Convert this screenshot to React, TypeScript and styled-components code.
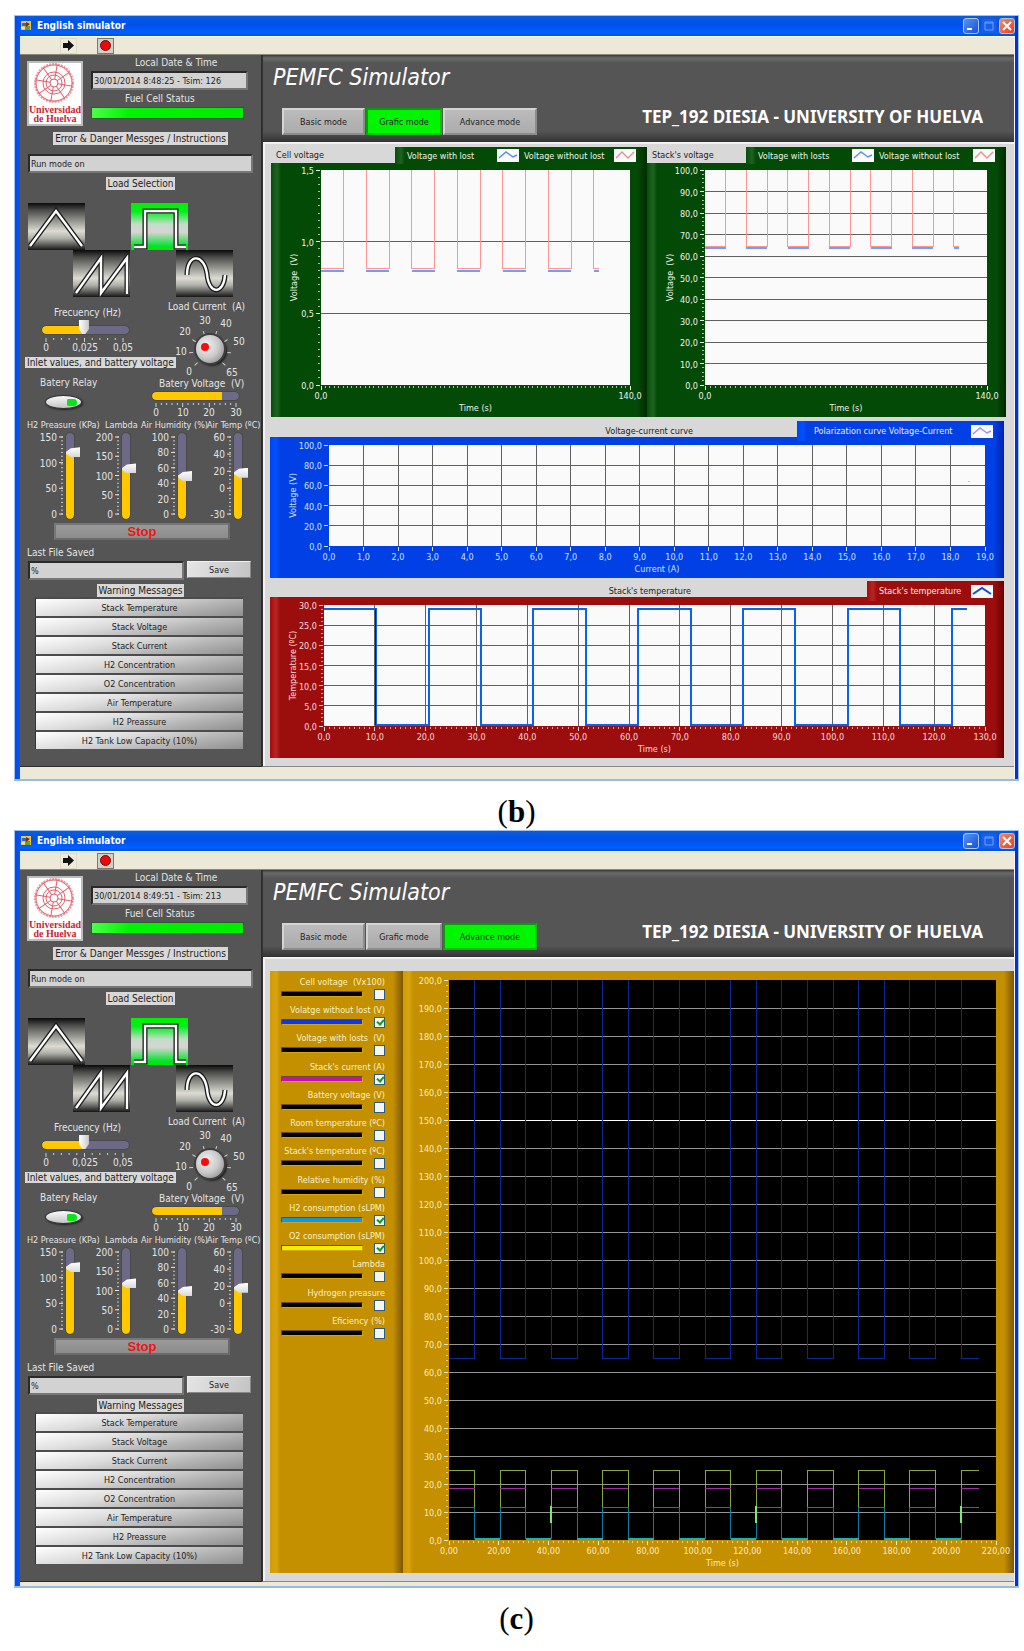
import React, { useId, useState } from "react";
import styled, { createGlobalStyle, css } from "styled-components";

const uiFont = `"DejaVu Sans Condensed", Tahoma, "Noto Sans", sans-serif`;

const Global = createGlobalStyle`
  * { box-sizing: border-box; }
  body { margin: 0; background: #fff; font-family: ${uiFont}; font-size: 10px; }
  button, input { font-family: inherit; font-size: 9px; margin: 0; }
`;

/* ---------- page and window frame ---------- */

const Page = styled.main`
  padding: 15px 5px 0 14px;
`;

const Figure = styled.figure`
  margin: 0;
`;

const Caption = styled.figcaption`
  height: 49px;
  padding-top: 13px;
  text-align: center;
  font-family: "Liberation Serif", "Times New Roman", serif;
  font-size: 31px;
  line-height: 36px;
  color: #000;
`;

const Frame = styled.section`
  border: 1px solid #9cc1ec;
  border-bottom: 2px solid #98bbe0;
  padding: 0 3px 0 5px;
  background: linear-gradient(90deg, #0a48e8 0, #0058f0 5px, #0831c8 100%);
`;

const TitleBar = styled.header`
  display: flex;
  align-items: center;
  gap: 5px;
  height: 20px;
  background: linear-gradient(#0a5ce0, #0050e8 40%, #0060ff 85%, #0050d8);
`;

const TitleText = styled.h1`
  flex: 1;
  margin: 0;
  font-size: 10px;
  line-height: 18px;
  color: #fff;
`;

const CaptionButtons = styled.div`
  display: flex;
  gap: 2px;
`;

const CaptionButton = styled.button<{ $kind: "min" | "max" | "close" }>`
  width: 16px;
  height: 16px;
  padding: 0;
  border-radius: 3px;
  border: 1px solid ${(p) => (p.$kind === "max" ? "#1659e0" : "#a9c6f5")};
  background: ${(p) =>
    p.$kind === "close"
      ? "linear-gradient(135deg, #f08a68, #e8401c)"
      : p.$kind === "max"
      ? "#1460ea"
      : "linear-gradient(135deg, #5b92f2, #1450d8)"};
  svg { display: block; }
`;

const Body = styled.div`
  background: #ece9d8;
  border-right: 1px solid #f4f4fa;
`;

const ToolBar = styled.div`
  display: flex;
  align-items: center;
  gap: 20px;
  height: 19px;
  padding-left: 40px;
  border-top: 1px solid #fff;
  border-bottom: 1px solid #8a8878;
`;

const ToolButton = styled.button<{ $framed?: boolean }>`
  width: 17px;
  height: 16px;
  padding: 0;
  border: 1px solid ${(p) => (p.$framed ? "#7c7a70" : "#dedac8")};
  background: ${(p) => (p.$framed ? "#d4d0c8" : "#eeebdc")};
  svg { display: block; margin: 0 auto; }
`;

const StatusBar = styled.div<{ $h: number }>`
  height: ${(p) => p.$h}px;
  background: #ece9d8;
`;

const Columns = styled.div`
  display: grid;
  grid-template-columns: 242px minmax(0, 1fr);
`;

/* ---------- side bar ---------- */

const Side = styled.aside`
  overflow: hidden;
  background: #555;
  color: #e4e4e4;
  border-right: 1px solid #2c2c2c;
  border-bottom: 1px solid #2c2c2c;
  padding-bottom: 16px;
`;

const TopArea = styled.div`
  display: grid;
  grid-template-columns: 56px 1fr;
  column-gap: 8px;
  padding-left: 7px;
  height: 71px;
`;

const LogoBox = styled.div`
  height: 65px;
  margin-top: 6px;
  background: #fff;
  border: 2px solid #bcbcbc;
`;

const Readouts = styled.div`
  display: grid;
  grid-template-rows: 16px 19px 17px 12px;
  align-items: end;
  align-content: start;
`;

const SmallLabel = styled.label<{ $left?: number }>`
  display: block;
  height: 15px;
  line-height: 14px;
  white-space: nowrap;
  padding-left: ${(p) => p.$left ?? 0}px;
`;

const Field = styled.input<{ $w: number }>`
  display: block;
  width: ${(p) => p.$w}px;
  height: 19px;
  padding: 0 1px;
  border: 2px solid;
  border-color: #2a2a2a #777 #777 #2a2a2a;
  border-radius: 0;
  background: #d2d2d2;
  color: #222;
`;

const Led = styled.div`
  width: 153px;
  height: 12px;
  border: 1px solid #2f5a2f;
  background: linear-gradient(100deg, #4cff4c, #00f400 25%, #00ec00);
`;

const TagRow = styled.div<{ $top: number }>`
  display: flex;
  justify-content: center;
  margin-top: ${(p) => p.$top}px;
`;

const Tag = styled.span`
  height: 13px;
  padding: 0 2px;
  line-height: 13px;
  white-space: nowrap;
  background: #d8d8d8;
  color: #222;
`;

const MessageRow = styled.div`
  padding: 9px 0 0 8px;
`;

const Waves = styled.div`
  margin-top: 13px;
`;

const WaveRow = styled.div<{ $left: number }>`
  display: flex;
  gap: 46px;
  padding-left: ${(p) => p.$left}px;
`;

const WaveButton = styled.button<{ $on?: boolean }>`
  width: 57px;
  height: 47px;
  padding: 0;
  border: 0;
  background: ${(p) =>
    p.$on
      ? "linear-gradient(#00f000 0, #00f01c 18%, #c4dcc8 45%, #d8d4d4 62%, #00e428 92%, #00e800)"
      : "linear-gradient(#0a0a0a 0, #4a4a48 15%, #dcdcd4 60%, #b0b0aa 75%, #161616 100%)"};
  svg { display: block; }
`;

const Split = styled.div<{ $left: number; $top: number; $h: number }>`
  display: grid;
  grid-template-columns: ${(p) => p.$left}px 1fr;
  margin-top: ${(p) => p.$top}px;
  height: ${(p) => p.$h}px;
`;

const Stack = styled.div<{ $pad?: string }>`
  padding: ${(p) => p.$pad ?? "0"};
  svg { display: block; }
`;

const HSlider = styled.input<{ $fill: number; $bare?: boolean }>`
  appearance: none;
  display: block;
  width: 87px;
  height: 8px;
  border-radius: 4px;
  outline: 1px solid #4a4a4a;
  background: linear-gradient(90deg, #ffc800 ${(p) => p.$fill}%, #6c6a86 ${(p) => p.$fill}%);
  &::-webkit-slider-runnable-track { height: 8px; }
  &::-webkit-slider-thumb {
    appearance: none;
    width: ${(p) => (p.$bare ? 0 : 10)}px;
    height: 14px;
    margin-top: -6px;
    background: linear-gradient(90deg, #fff, #c8c8c8);
    clip-path: polygon(0 0, 100% 0, 100% 65%, 65% 100%, 35% 100%, 0 65%);
  }
`;

const Dial = styled.div`
  display: grid;
  place-items: center;
  width: 84px;
  height: 60px;
  > * { grid-area: 1 / 1; }
`;

const Knob = styled.input`
  appearance: none;
  width: 28px;
  height: 28px;
  margin-top: 4px;
  padding: 0 4px 0 1px;
  border-radius: 50%;
  background: radial-gradient(circle at 38% 38%, #f4f4f4, #c8c8c8 50%, #777 100%);
  box-shadow: 0 0 0 2px #3e3e3e, 2px 2px 2px 1px #222;
  &::-webkit-slider-thumb {
    appearance: none;
    width: 8px;
    height: 8px;
    margin-top: -5px;
    border-radius: 50%;
    background: #f80c0c;
  }
`;

const Relay = styled.button`
  display: flex;
  justify-content: flex-end;
  align-items: center;
  width: 37px;
  height: 14px;
  margin: 4px 0 0 25px;
  padding: 0 4px;
  border: 1px solid #333;
  border-radius: 50%;
  background: linear-gradient(#fafafa, #c4c4c4);
  box-shadow: 1px 1px 2px #222;
`;

const RelayLamp = styled.span`
  width: 10px;
  height: 7px;
  border-radius: 2px 5px 5px 2px;
  background: #0ae414;
`;

const GaugeNames = styled.div`
  display: grid;
  grid-template-columns: 78px 36px 66px 55px;
  padding-left: 7px;
  height: 15px;
  font-size: 9px;
  line-height: 15px;
  white-space: pre;
`;

const Gauges = styled.div`
  display: grid;
  grid-template-columns: repeat(4, 56px);
  padding-left: 18px;
`;

const Gauge = styled.div`
  display: flex;
  gap: 2px;
`;

const VSlider = styled.input<{ $fill: number }>`
  appearance: none;
  writing-mode: vertical-lr;
  direction: rtl;
  width: 8px;
  height: 86px;
  border-radius: 4px;
  outline: 1px solid #4a4a4a;
  background: linear-gradient(0deg, #ffc800 ${(p) => p.$fill}%, #6c6a86 ${(p) => p.$fill}%);
  &::-webkit-slider-thumb {
    appearance: none;
    width: 14px;
    height: 10px;
    translate: 3px 0;
    background: linear-gradient(#fff, #d8d8d8);
    clip-path: polygon(100% 0, 100% 100%, 35% 100%, 0 65%, 0 45%, 35% 10%);
  }
`;

const StopButton = styled.button`
  display: block;
  width: 176px;
  height: 17px;
  margin: 4px 0 6px 34px;
  padding: 0;
  border: 2px solid;
  border-color: #777 #6a6a6a #6a6a6a #777;
  background: linear-gradient(#9a9a9a, #8c8c8c);
  color: #f01414;
  font: bold 13px/12px "Liberation Sans", Arial, sans-serif;
`;

const FileRow = styled.div`
  display: flex;
  gap: 3px;
  padding-left: 8px;
`;

const SaveButton = styled.button`
  width: 64px;
  height: 17px;
  padding: 0;
  border: 1px solid;
  border-color: #f0f0f0 #888 #888 #f0f0f0;
  background: linear-gradient(100deg, #e4e4e4, #c4c4c4);
  color: #222;
`;

const Warnings = styled.div`
  display: grid;
  grid-auto-rows: 19px;
  width: 208px;
  margin-left: 15px;
`;

const WarningButton = styled.button`
  padding: 0;
  border: 0;
  border-top: 2px solid #4c4c4c;
  border-left: 1px solid #333;
  background: linear-gradient(170deg, #fff 0, #dcdcdc 38%, #b4b4b4 68%, #8f8f8f 100%);
  color: #222;
`;

/* ---------- main area ---------- */

const Main = styled.div`
  display: flex;
  flex-direction: column;
  border-left: 1px solid #333;
  border-bottom: 1px solid #888;
`;

const Banner = styled.div`
  height: 87px;
  padding: 7px 31px 0 10px;
  background: linear-gradient(#3a3a3a 0, #6a6a6a 3px, #555 8px, #555 76px, #333 100%);
  color: #fff;
`;

const BannerTitle = styled.h2`
  margin: 0 0 16px;
  font-size: 23px;
  line-height: 30px;
  font-style: italic;
  font-weight: 400;
`;

const BannerRow = styled.div`
  display: flex;
  justify-content: space-between;
  padding-left: 9px;
`;

const Modes = styled.nav`
  display: flex;
  gap: 1px;
`;

const ModeButton = styled.button<{ $w: number; $on: boolean }>`
  width: ${(p) => p.$w}px;
  height: 27px;
  padding: 0;
  border: 2px solid;
  color: #222;
  ${(p) =>
    p.$on
      ? css`
          border-color: #0a9a0a #08c008 #08c008 #0a9a0a;
          background: #00f600;
        `
      : css`
          border-color: #d4d4d4 #8c8c8c #8c8c8c #d4d4d4;
          background: linear-gradient(#bcbcbc, #ababab);
        `}
`;

const Affiliation = styled.strong`
  font-family: "Noto Sans", "Open Sans", sans-serif;
  font-size: 17px;
  line-height: 18px;
  white-space: nowrap;
`;

const Content = styled.div<{ $pad: string }>`
  flex: 1;
  padding: ${(p) => p.$pad};
  background: #d8d8d8;
  border: solid #f2f2f2;
  border-width: 2px 0 0 2px;
`;

type Tone = "green" | "blue" | "red" | "gold";
const tones: Record<Tone, { base: string; light: string; dark: string; edge: string }> = {
  green: { base: "#034a07", light: "#1e6420", dark: "#002c02", edge: "#064e0a" },
  blue: { base: "#0040e4", light: "#0052fc", dark: "#0022b0", edge: "#0044f0" },
  red: { base: "#9c0e0e", light: "#b82424", dark: "#6c0000", edge: "#a40c0c" },
  gold: { base: "#c49000", light: "#d8a40c", dark: "#7c5600", edge: "#d09a04" },
};
const bevel = (t: Tone) => {
  const c = tones[t];
  return `linear-gradient(90deg, ${c.edge} 0, ${c.light} 6px, ${c.base} 10px, ${c.base} calc(100% - 10px), ${c.dark} 100%)`;
};

const TwoUp = styled.div`
  display: grid;
  grid-template-columns: 376fr 359fr;
  padding-left: 1px;
`;

const Panel = styled.section`
  min-width: 0;
`;

const WidePanel = styled(Panel)<{ $top: number }>`
  margin: ${(p) => p.$top}px 2px 0 0;
`;

const PanelHead = styled.div<{ $cols: string }>`
  display: grid;
  grid-template-columns: ${(p) => p.$cols};
  height: 16px;
  font-size: 9px;
  line-height: 16px;
`;

const PanelName = styled.h3<{ $center?: boolean }>`
  margin: 0;
  padding-left: 5px;
  font-size: 9px;
  line-height: ${(p) => (p.$center ? 20 : 17)}px;
  font-weight: 400;
  color: #222;
  white-space: nowrap;
  text-align: ${(p) => (p.$center ? "right" : "left")};
`;

const Legend = styled.div<{ $tone: Tone }>`
  display: flex;
  align-items: center;
  gap: 5px;
  padding: 0 11px 0 12px;
  background: ${(p) => bevel(p.$tone)};
  color: #f0f0e8;
`;

const LegendItem = styled.span`
  display: flex;
  flex: 1;
  align-items: center;
  justify-content: space-between;
  white-space: nowrap;
`;

const ChartBox = styled.div<{ $tone: Tone }>`
  background: ${(p) => bevel(p.$tone)};
  svg { display: block; width: 100%; height: auto; }
`;

const Advanced = styled.div`
  display: grid;
  grid-template-columns: 133px minmax(0, 1fr);
`;

const SignalPanel = styled.div`
  background: ${bevel("gold")};
  padding: 5px 18px 0 11px;
`;

const Signals = styled.ul`
  display: grid;
  grid-auto-rows: 1fr;
  height: 367px;
  margin: 0;
  padding: 0;
  list-style: none;
`;

const SignalLabel = styled.label`
  display: grid;
  grid-template-columns: 82px 11px;
  column-gap: 11px;
  color: #f8f0cc;
  font-size: 9px;
  line-height: 13px;
`;

const SignalName = styled.span`
  grid-column: 1 / -1;
  text-align: right;
  white-space: pre;
`;

const SignalLine = styled.span<{ $c: string }>`
  height: 6px;
  margin-top: 2px;
  background: ${(p) => p.$c};
  border: 1px solid;
  border-color: #6c4c00 #d8a40c #d8a40c #6c4c00;
`;

const Check = styled.input`
  appearance: none;
  display: block;
  width: 11px;
  height: 11px;
  border: 1px solid #2c5c84;
  background: #f6f6f0;
  &:checked::after {
    content: "";
    display: block;
    width: 3px;
    height: 5px;
    margin: 0 0 0 3px;
    border: solid #0a9a2a;
    border-width: 0 2px 2px 0;
    rotate: 40deg;
  }
`;

/* ---------- drawings ---------- */

const Logo = () => (
  <svg width="52" height="61" viewBox="0 0 52 61" role="img" aria-label="Universidad de Huelva">
    <g fill="none" stroke="#e0606c">
      <circle cx="25" cy="20" r="18" strokeWidth="1" />
      <circle cx="25" cy="20" r="19" strokeWidth="2" strokeDasharray="2 1" opacity=".65" />
      <circle cx="25" cy="20" r="11" />
      <circle cx="25" cy="20" r="8" />
      <circle cx="25" cy="20" r="4" />
      {[0, 45, 90, 135, 180, 225, 270, 315].map((a) => (
        <path key={a} d="M25 16V1" transform={`rotate(${a + 10} 25 20)`} />
      ))}
    </g>
    <g fill="#cc1c34" fontFamily="Liberation Serif, serif" fontWeight="bold" fontSize="10" textAnchor="middle">
      <text x="26" y="50">Universidad</text>
      <text x="26" y="59">de Huelva</text>
    </g>
  </svg>
);

const wavePaths = {
  triangle: "M2 43L28 8L54 43",
  square: "M3 44H14V8H45V44H55",
  saw: "M3 43L28 8V43L54 8V44",
  sine: "M11 25C11 3 28 3 31 24C33 46 48 44 49 25",
};
const Wave = ({ kind }: { kind: keyof typeof wavePaths }) => (
  <svg width="57" height="47" viewBox="0 0 57 47" fill="none">
    <path d={wavePaths[kind]} stroke="#1c1c1c" strokeWidth="5" />
    <path d={wavePaths[kind]} stroke="#fff" strokeWidth="2.4" />
  </svg>
);

const Swatch = ({ color, bold, d = "M2 9L9 3L16 8L20 6" }: { color: string; bold?: boolean; d?: string }) => (
  <svg width="22" height="13" viewBox="0 0 22 13" fill="none">
    <rect width="22" height="13" fill="#fafafa" />
    <path d={d} stroke={color} strokeWidth={bold ? 2 : 1.4} />
  </svg>
);
const ZIGZAG = "M2 9L8 3L14 9L20 3";

const range = (n: number, step: number, from = 0) => Array.from({ length: n }, (_, i) => from + i * step);
const fmt = (v: number, digits = 1) => v.toFixed(digits).replace(".", ",");

type Pt = [number, number];
type Series = { pts: Pt[]; color: string; width?: number };
type PlotProps = {
  w: number;
  h: number;
  box: [number, number, number, number];
  max: Pt;
  yStep: number;
  xLabels: number[];
  xMinor?: number;
  yMinor?: number;
  vGrid?: boolean;
  dark?: boolean;
  ink: string;
  yTitle?: string;
  xTitle: string;
  xDigits?: number;
  series: Series[];
};

const Plot = (p: PlotProps) => {
  const [l, t, r, b] = p.box;
  const X = (v: number) => l + (v / p.max[0]) * (r - l);
  const Y = (v: number) => b - (v / p.max[1]) * (b - t);
  const yVals = range(Math.round(p.max[1] / p.yStep) + 1, p.yStep);
  const grid = p.dark ? "#949494" : "#606060";
  return (
    <svg viewBox={`0 0 ${p.w} ${p.h}`} fontFamily="DejaVu Sans Condensed, Noto Sans, sans-serif" fontSize="9" fill={p.ink}>
      <rect x={l} y={t} width={r - l} height={b - t} fill={p.dark ? "#000" : "#fafafa"} />
      <g shapeRendering="crispEdges" stroke={grid} strokeWidth="1">
        {yVals.slice(1, -1).map((v) => (
          <path key={v} d={`M${l} ${Y(v)}H${r}`} stroke={p.dark && v === 150 ? "#fff" : grid} />
        ))}
        {p.vGrid && p.xLabels.slice(1, -1).map((v) => <path key={v} d={`M${X(v)} ${t}V${b}`} />)}
      </g>
      <g shapeRendering="crispEdges" stroke={p.ink} strokeWidth="1">
        {yVals.map((v) => (
          <path key={v} d={`M${l - 5} ${Y(v)}h4`} />
        ))}
        {p.yMinor && range(p.yMinor + 1, p.max[1] / p.yMinor).map((v) => <path key={v} d={`M${l - 3} ${Y(v)}h2`} opacity=".7" />)}
        {p.xLabels.map((v) => (
          <path key={v} d={`M${X(v)} ${b + 1}v4`} />
        ))}
        {p.xMinor && range(p.xMinor + 1, p.max[0] / p.xMinor).map((v) => <path key={v} d={`M${X(v)} ${b + 1}v2`} opacity=".7" />)}
      </g>
      {yVals.map((v) => (
        <text key={v} x={l - 7} y={Y(v) + 4} textAnchor="end">{fmt(v)}</text>
      ))}
      {p.xLabels.map((v) => (
        <text key={v} x={X(v)} y={b + 14} textAnchor="middle">{fmt(v, p.xDigits)}</text>
      ))}
      <text x={(l + r) / 2} y={b + 26} textAnchor="middle">{p.xTitle}</text>
      {p.yTitle && (
        <text transform={`translate(26 ${(t + b) / 2}) rotate(-90)`} textAnchor="middle" xmlSpace="preserve">
          {p.yTitle}
        </text>
      )}
      <g fill="none" shapeRendering="crispEdges">
        {p.series.map((s, i) => (
          <polyline
            key={i}
            stroke={s.color}
            strokeWidth={s.width ?? 1}
            points={s.pts.map(([x, y]) => `${X(x)},${Y(y)}`).join(" ")}
          />
        ))}
      </g>
    </svg>
  );
};

/* The load is a square wave: on for HALF seconds, then off for HALF seconds. */
const HALF = 10.3;
const onPulses = (end: number): Pt[] =>
  range(Math.ceil(end / (2 * HALF)), 2 * HALF)
    .filter((s) => s < end)
    .map((s) => [s, Math.min(s + HALF, end)]);

const wells = (end: number, top: number, level: number, color: string, width = 1): Series[] =>
  onPulses(end).map(([a, z]) => ({
    color,
    width,
    pts: [...(a > 0 ? [[a, top] as Pt] : []), [a, level], [z, level], ...(z < end ? [[z, top] as Pt] : [])],
  }));
const dashes = (end: number, level: number, color: string, width = 1): Series[] =>
  onPulses(end).map(([a, z]) => ({ color, width, pts: [[a, level], [z, level]] }));
const squareWave = (end: number, high: number, low: number): Pt[] =>
  onPulses(end).flatMap(([a, z]) => [
    ...(a > 0 ? [[a, low] as Pt] : []),
    [a, high] as Pt,
    [z, high] as Pt,
    ...(z < end ? [[z, low] as Pt] : []),
  ]);

/* ---------- side bar parts ---------- */

type Scale = { name: string; top: number; bottom: number; marks: number[]; value: number };
const scales: Scale[] = [
  { name: "H2 Preasure (KPa)", top: 150, bottom: 0, marks: [150, 100, 50, 0], value: 122 },
  { name: "Lambda", top: 200, bottom: 0, marks: [200, 150, 100, 50, 0], value: 120 },
  { name: "Air Humidity (%)", top: 100, bottom: 0, marks: [100, 80, 60, 40, 20, 0], value: 50 },
  { name: "Air Temp (ºC)", top: 60, bottom: -30, marks: [60, 40, 20, 0, -30], value: 19 },
];

const ScaleMarks = ({ s }: { s: Scale }) => (
  <svg width="26" height="86" viewBox="0 0 26 86" overflow="visible" fontSize="10" fill="#e4e4e4">
    {range(21, 77 / 20, 4).map((y) => (
      <path key={y} d={`M23 ${y}h2`} stroke="#c8c8c8" />
    ))}
    {s.marks.map((m) => {
      const y = 4 + ((s.top - m) / (s.top - s.bottom)) * 77;
      return (
        <g key={m}>
          <path d={`M21 ${y}h4`} stroke="#e4e4e4" />
          <text x="19" y={y + 4} textAnchor="end">{m}</text>
        </g>
      );
    })}
  </svg>
);

const dialMarks: [string, number, number][] = [
  ["0", 21, 60], ["10", 13, 40], ["20", 17, 20], ["30", 37, 9], ["40", 58, 12], ["50", 71, 30], ["65", 64, 61],
];

const warnings = [
  "Stack Temperature", "Stack Voltage", "Stack Current", "H2 Concentration",
  "O2 Concentration", "Air Temperature", "H2 Preassure", "H2 Tank Low Capacity (10%)",
];

const Sidebar = ({ stamp }: { stamp: string }) => {
  const id = useId();
  return (
    <Side>
      <TopArea>
        <LogoBox><Logo /></LogoBox>
        <Readouts>
          <SmallLabel htmlFor={id + "date"} $left={44}>Local Date &amp; Time</SmallLabel>
          <Field id={id + "date"} $w={157} defaultValue={stamp} readOnly />
          <SmallLabel as="div" $left={34}>Fuel Cell Status</SmallLabel>
          <Led role="status" aria-label="Fuel Cell Status" />
        </Readouts>
      </TopArea>
      <TagRow $top={6}><Tag as="label" htmlFor={id + "msg"}>Error &amp; Danger Messges / Instructions</Tag></TagRow>
      <MessageRow><Field id={id + "msg"} $w={225} defaultValue="Run mode on" readOnly /></MessageRow>
      <TagRow $top={4}><Tag>Load Selection</Tag></TagRow>
      <Waves>
        <WaveRow $left={8}>
          <WaveButton aria-label="Triangle wave"><Wave kind="triangle" /></WaveButton>
          <WaveButton $on aria-label="Square wave"><Wave kind="square" /></WaveButton>
        </WaveRow>
        <WaveRow $left={53}>
          <WaveButton aria-label="Sawtooth wave"><Wave kind="saw" /></WaveButton>
          <WaveButton aria-label="Sine wave"><Wave kind="sine" /></WaveButton>
        </WaveRow>
      </Waves>
      <Split $left={148} $top={3} $h={70}>
        <Stack $pad="6px 0 0 5px">
          <SmallLabel htmlFor={id + "freq"} $left={29}>Frecuency (Hz)</SmallLabel>
          <Stack $pad="5px 0 0 17px">
            <HSlider id={id + "freq"} type="range" min="0" max="0.05" step="0.001" defaultValue="0.024" $fill={48} />
            <svg width="92" height="22" viewBox="0 0 92 22" overflow="visible" fontSize="10" fill="#e4e4e4" textAnchor="middle">
              {range(11, 7.7, 4).map((x, i) => (
                <path key={x} d={`M${x} 4v${i % 5 ? 2 : 4}`} stroke="#d0d0d0" />
              ))}
              <text x="4" y="17">0</text>
              <text x="43" y="17">0,025</text>
              <text x="81" y="17">0,05</text>
            </svg>
          </Stack>
          <Tag>Inlet values, and battery voltage</Tag>
        </Stack>
        <div>
          <SmallLabel htmlFor={id + "load"}>Load Current &nbsp;(A)</SmallLabel>
          <Dial>
            <svg width="84" height="64" viewBox="0 0 84 64" overflow="visible" fontSize="10" fill="#e4e4e4" textAnchor="middle">
              {range(8, 38, -133).map((a) => (
                <path key={a} d="M42 15v4" transform={`rotate(${a} 42 36)`} stroke="#d0d0d0" />
              ))}
              {dialMarks.map(([s, x, y]) => (
                <text key={s} x={x} y={y}>{s}</text>
              ))}
            </svg>
            <Knob id={id + "load"} type="range" min="0" max="65" defaultValue="18" />
          </Dial>
        </div>
      </Split>
      <Split $left={130} $top={6} $h={42}>
        <Stack>
          <SmallLabel as="div" $left={20}>Batery Relay</SmallLabel>
          <Relay aria-label="Batery Relay" aria-pressed="true"><RelayLamp /></Relay>
        </Stack>
        <Stack $pad="1px 0 0 2px">
          <SmallLabel htmlFor={id + "bat"} $left={7}>Batery Voltage &nbsp;(V)</SmallLabel>
          <HSlider id={id + "bat"} type="range" min="0" max="30" defaultValue="24" $fill={80} $bare />
          <svg width="92" height="18" viewBox="0 0 92 18" overflow="visible" fontSize="10" fill="#e4e4e4" textAnchor="middle">
            {range(16, 16 / 3, 4).map((x, i) => (
              <path key={x} d={`M${x} 3v${i % 5 ? 2 : 4}`} stroke="#d0d0d0" />
            ))}
            <text x="4" y="16">0</text>
            <text x="31" y="16">10</text>
            <text x="57" y="16">20</text>
            <text x="84" y="16">30</text>
          </svg>
        </Stack>
      </Split>
      <GaugeNames>
        {scales.map((s) => (
          <label key={s.name} htmlFor={id + s.name}>{s.name}</label>
        ))}
      </GaugeNames>
      <Gauges>
        {scales.map((s) => (
          <Gauge key={s.name}>
            <ScaleMarks s={s} />
            <VSlider
              id={id + s.name}
              type="range"
              min={s.bottom}
              max={s.top}
              defaultValue={s.value}
              $fill={((s.value - s.bottom) / (s.top - s.bottom)) * 88 + 6}
            />
          </Gauge>
        ))}
      </Gauges>
      <StopButton>Stop</StopButton>
      <SmallLabel htmlFor={id + "file"} $left={7}>Last File Saved</SmallLabel>
      <FileRow>
        <Field id={id + "file"} $w={156} defaultValue="%" />
        <SaveButton>Save</SaveButton>
      </FileRow>
      <TagRow $top={4}><Tag>Warning Messages</Tag></TagRow>
      <Warnings>
        {warnings.map((w) => (
          <WarningButton key={w}>{w}</WarningButton>
        ))}
      </Warnings>
    </Side>
  );
};

/* ---------- main views ---------- */

const pale = "#f0f0e8";

const GraphicView = () => (
  <Content $pad="3px 8px 8px 5px">
    <TwoUp>
      <Panel>
        <PanelHead $cols="124fr 252fr">
          <PanelName>Cell voltage</PanelName>
          <Legend $tone="green">
            <LegendItem>Voltage with lost<Swatch color="#5a8cf0" /></LegendItem>
            <LegendItem>Voltage without lost<Swatch color="#f08c8c" d={ZIGZAG} /></LegendItem>
          </Legend>
        </PanelHead>
        <ChartBox $tone="green">
          <Plot
            w={376} h={254} box={[50, 7, 359, 222]} max={[140, 1.5]} yStep={0.5} yMinor={30} xMinor={70}
            xLabels={[0, 140]} ink={pale} yTitle="Voltage  (V)" xTitle="Time (s)"
            series={[...dashes(126, 0.792, "#6ea0f8", 2), ...wells(126, 1.5, 0.81, "#ff9494")]}
          />
        </ChartBox>
      </Panel>
      <Panel>
        <PanelHead $cols="99fr 260fr">
          <PanelName>Stack's voltage</PanelName>
          <Legend $tone="green">
            <LegendItem>Voltage with losts<Swatch color="#5a8cf0" /></LegendItem>
            <LegendItem>Voltage without lost<Swatch color="#f08c8c" d={ZIGZAG} /></LegendItem>
          </Legend>
        </PanelHead>
        <ChartBox $tone="green">
          <Plot
            w={359} h={254} box={[58, 7, 340, 222]} max={[140, 100]} yStep={10} yMinor={50} xMinor={56}
            xLabels={[0, 140]} ink={pale} yTitle="Voltage  (V)" xTitle="Time (s)"
            series={[...dashes(126, 63.6, "#6ea0f8", 2), ...wells(126, 100, 64.6, "#ff9494")]}
          />
        </ChartBox>
      </Panel>
    </TwoUp>
    <WidePanel $top={4}>
      <PanelHead $cols="423fr 104fr 207fr">
        <PanelName $center>Voltage-current curve</PanelName>
        <span />
        <Legend $tone="blue">
          <span />
          <LegendItem>Polarization curve Voltage-Current<Swatch color="#9a90f8" /></LegendItem>
        </Legend>
      </PanelHead>
      <ChartBox $tone="blue">
        <Plot
          w={734} h={141} box={[59, 8, 715, 109]} max={[19, 100]} yStep={20} vGrid xLabels={range(20, 1)}
          ink="#d4e4ff" yTitle="Voltage (V)" xTitle="Current (A)"
          series={[{ color: "#c0c0ff", pts: [[18.52, 64], [18.56, 64]] }]}
        />
      </ChartBox>
    </WidePanel>
    <WidePanel $top={3}>
      <PanelHead $cols="421fr 176fr 137fr">
        <PanelName $center>Stack's temperature</PanelName>
        <span />
        <Legend $tone="red">
          <LegendItem>Stack's temperature<Swatch color="#0a50e0" bold d="M2 9L11 3L20 9" /></LegendItem>
        </Legend>
      </PanelHead>
      <ChartBox $tone="red">
        <Plot
          w={734} h={161} box={[54, 8, 715, 129]} max={[130, 30]} yStep={5} yMinor={30} xMinor={130} vGrid
          xLabels={range(14, 10)} ink="#f8dcdc" yTitle="Temperature (ºC)" xTitle="Time (s)"
          series={[
            { color: "#0a62f0", width: 2, pts: squareWave(126.5, 29, 0.3) },
            { color: "#001c90", pts: [[10.2, 29], [10.2, 0.3]] },
          ]}
        />
      </ChartBox>
    </WidePanel>
  </Content>
);

const signals: [string, string, boolean][] = [
  ["Cell voltage  (Vx100)", "#000", false],
  ["Volatge without lost (V)", "#0838e8", true],
  ["Voltage with losts  (V)", "#000", false],
  ["Stack's current (A)", "#c410b4", true],
  ["Battery voltage (V)", "#000", false],
  ["Room temperature (ºC)", "#000", false],
  ["Stack's temperature (ºC)", "#000", false],
  ["Relative humidity (%)", "#000", false],
  ["H2 consumption (sLPM)", "#0c98e8", true],
  ["O2 consumption (sLPM)", "#ecf000", true],
  ["Lambda", "#000", false],
  ["Hydrogen preasure", "#000", false],
  ["Eficiency (%)", "#000", false],
];

const END = 213;
const idleLines: Series[] = onPulses(END)
  .slice(0, -1)
  .map(([a]) => ({ color: "#18b4b4", width: 2, pts: [[a + HALF, 0.5], [a + 2 * HALF, 0.5]] }));
const startSpikes: Series[] = [2, 6, 10].map((k) => ({
  color: "#7ce878",
  width: 2,
  pts: [[k * 2 * HALF, 12], [k * 2 * HALF, 6]],
}));
const advancedSeries: Series[] = [
  ...wells(END, 200, 65, "#0a2896"),
  ...wells(END, 11.5, 24.8, "#86a83c"),
  ...dashes(END, 18.5, "#9c2ca0"),
  { color: "#0c7ca4", pts: squareWave(END, 11.5, 0.5) },
  ...idleLines,
  ...startSpikes,
];

const AdvancedView = () => (
  <Content $pad="12px 0 8px 5px">
    <Advanced>
      <SignalPanel>
        <Signals>
          {signals.map(([name, color, on]) => (
            <li key={name}>
              <SignalLabel>
                <SignalName>{name}</SignalName>
                <SignalLine $c={color} />
                <Check type="checkbox" defaultChecked={on} />
              </SignalLabel>
            </li>
          ))}
        </Signals>
      </SignalPanel>
      <ChartBox $tone="gold">
        <Plot
          w={611} h={602} box={[46, 9, 593, 569]} max={[220, 200]} yStep={10} yMinor={100} xMinor={110}
          xLabels={range(12, 20)} xDigits={2} dark ink="#f8ecc0" xTitle="Time (s)"
          series={advancedSeries}
        />
      </ChartBox>
    </Advanced>
  </Content>
);

const modes = [
  { name: "Basic mode", w: 83 },
  { name: "Grafic mode", w: 76 },
  { name: "Advance mode", w: 94 },
];

const SimulatorWindow = ({ stamp, initial, status }: { stamp: string; initial: number; status: number }) => {
  const [mode, setMode] = useState(initial);
  return (
    <Frame>
      <TitleBar>
        <svg width="12" height="12" viewBox="0 0 12 12">
          <rect x="1" y="1" width="10" height="9" fill="#f0c83c" />
          <path d="M2 3h4v3H2z" fill="#3c64c8" />
          <path d="M5 6h5v4H5z" fill="#50a83c" />
          <path d="M6 2l4 2-4 3z" fill="#7c2c14" />
          <path d="M1 8h4" stroke="#fff" />
        </svg>
        <TitleText>English simulator</TitleText>
        <CaptionButtons>
          <CaptionButton $kind="min" aria-label="Minimize">
            <svg width="14" height="14"><path d="M3 10h5" stroke="#fff" strokeWidth="2" /></svg>
          </CaptionButton>
          <CaptionButton $kind="max" aria-label="Maximize">
            <svg width="14" height="14" fill="none"><path d="M3 3h8v8H3zM3 4h8" stroke="#6c9cf8" /></svg>
          </CaptionButton>
          <CaptionButton $kind="close" aria-label="Close">
            <svg width="14" height="14"><path d="M3 3l8 8M11 3l-8 8" stroke="#fff" strokeWidth="2" /></svg>
          </CaptionButton>
        </CaptionButtons>
      </TitleBar>
      <Body>
        <ToolBar>
          <ToolButton aria-label="Run">
            <svg width="13" height="13" viewBox="0 0 13 13"><path d="M1 4h5V1l6 5.500-6 5.500V9H1z" fill="#111" /></svg>
          </ToolButton>
          <ToolButton $framed aria-label="Abort">
            <svg width="13" height="13" viewBox="0 0 13 13">
              <circle cx="6.500" cy="6.500" r="5" fill="#f00808" stroke="#5c1414" />
            </svg>
          </ToolButton>
        </ToolBar>
        <Columns>
          <Sidebar stamp={stamp} />
          <Main>
            <Banner>
              <BannerTitle>PEMFC Simulator</BannerTitle>
              <BannerRow>
                <Modes>
                  {modes.map((m, i) => (
                    <ModeButton key={m.name} $w={m.w} $on={i === mode} onClick={() => setMode(i)}>
                      {m.name}
                    </ModeButton>
                  ))}
                </Modes>
                <Affiliation>TEP_192 DIESIA - UNIVERSITY OF HUELVA</Affiliation>
              </BannerRow>
            </Banner>
            {mode === 2 ? <AdvancedView /> : <GraphicView />}
          </Main>
        </Columns>
        <StatusBar $h={status} />
      </Body>
    </Frame>
  );
};

export default function App() {
  return (
    <Page>
      <Global />
      <Figure>
        <SimulatorWindow stamp="30/01/2014 8:48:25 - Tsim: 126" initial={1} status={12} />
        <Caption>(<b>b</b>)</Caption>
      </Figure>
      <Figure>
        <SimulatorWindow stamp="30/01/2014 8:49:51 - Tsim: 213" initial={2} status={4} />
        <Caption>(<b>c</b>)</Caption>
      </Figure>
    </Page>
  );
}
